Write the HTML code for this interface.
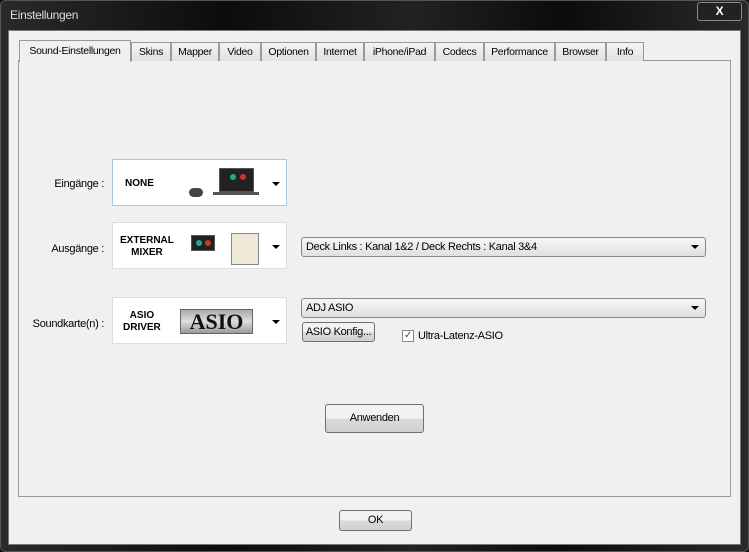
<!DOCTYPE html><html><head><style>
*{box-sizing:border-box}body{margin:0;width:749px;height:552px;overflow:hidden;background:#111;font-family:"Liberation Sans",sans-serif;font-size:11px;letter-spacing:-0.3px;color:#000;position:relative}
.a{position:absolute}
.win{left:0;top:0;width:749px;height:552px;background:linear-gradient(90deg,#2a2a2a,#0c0c0c 30%,#222 55%,#0b0b0b 75%,#2a2a2a);border:1px solid #555;border-radius:6px}
.client{left:8px;top:30px;width:733px;height:515px;background:#f0f0f0;border:1px solid #777}
.tab{top:42px;height:19px;background:linear-gradient(#f4f4f4,#e2e2e2);border:1px solid #999;border-bottom:none;text-align:center;line-height:18px;font-size:10.5px;white-space:nowrap;overflow:hidden}
.panel{left:18px;top:60px;width:713px;height:437px;background:#f0f0f0;border:1px solid #999}
.box{left:112px;width:175px;height:47px;background:#fff;border:1px solid #ddd}
.dd{left:301px;width:405px;height:20px;border:1px solid #888;border-radius:3px;background:linear-gradient(#f6f6f6,#e0e0e0);line-height:18px;padding-left:4px}
.arr{position:absolute;right:6px;top:7px;border:4px solid transparent;border-top:4px solid #000;border-bottom:0}
.btn{border:1px solid #707070;border-radius:3px;background:linear-gradient(#f2f2f2 50%,#dcdcdc 50%,#cfcfcf);text-align:center}
.lbl{width:104px;text-align:right}
.bt{font-weight:bold;font-size:10px;text-align:center;line-height:12px;letter-spacing:0}
.scr{background:#222;border:1px solid #555}
.dot{position:absolute;width:6px;height:6px;border-radius:3px}
</style></head><body>
<div class="a win"></div>
<div class="a" style="left:10px;top:8px;color:#ddd;font-size:12px">Einstellungen</div>
<div class="a" style="left:697px;top:2px;width:45px;height:19px;border:1px solid #888;border-radius:3px;background:#222;color:#fff;font-weight:bold;text-align:center;line-height:17px;font-size:12px">X</div>
<div class="a client"></div>
<div class="a panel"></div>
<div class="a tab" style="left:131px;width:40px">Skins</div>
<div class="a tab" style="left:171px;width:48px">Mapper</div>
<div class="a tab" style="left:219px;width:42px">Video</div>
<div class="a tab" style="left:261px;width:55px">Optionen</div>
<div class="a tab" style="left:316px;width:48px">Internet</div>
<div class="a tab" style="left:364px;width:71px">iPhone/iPad</div>
<div class="a tab" style="left:435px;width:49px">Codecs</div>
<div class="a tab" style="left:484px;width:71px">Performance</div>
<div class="a tab" style="left:555px;width:51px">Browser</div>
<div class="a tab" style="left:606px;width:38px">Info</div>
<div class="a tab" style="left:19px;top:40px;height:22px;width:112px;background:#f0f0f0;line-height:21px">Sound-Einstellungen</div>

<div class="a lbl" style="left:0;top:178px">Eingänge :</div>
<div class="a lbl" style="left:0;top:243px">Ausgänge :</div>
<div class="a lbl" style="left:0;top:318px">Soundkarte(n) :</div>

<div class="a box" style="top:159px;border-color:#a8c8e8"><div class="a bt" style="left:12px;top:18px">NONE</div>
<div class="a scr" style="left:106px;top:8px;width:35px;height:24px"><div class="dot" style="left:10px;top:5px;background:#2a8"></div><div class="dot" style="left:20px;top:5px;background:#c33"></div></div><div class="a" style="left:100px;top:32px;width:46px;height:3px;background:#555"></div><div class="a" style="left:76px;top:28px;width:14px;height:9px;background:#444;border-radius:6px"></div>
<div class="arr" style="top:22px"></div></div>
<div class="a box" style="top:222px"><div class="a bt" style="left:7px;top:12px">EXTERNAL<br>MIXER</div>
<div class="a scr" style="left:78px;top:12px;width:24px;height:16px"><div class="dot" style="left:4px;top:4px;background:#2a8"></div><div class="dot" style="left:13px;top:4px;background:#c33"></div></div><div class="a" style="left:118px;top:10px;width:28px;height:32px;background:#eee8d8;border:1px solid #888"></div>
<div class="arr" style="top:22px"></div></div>
<div class="a box" style="top:297px"><div class="a bt" style="left:10px;top:12px">ASIO<br>DRIVER</div>
<div class="a" style="left:67px;top:11px;width:73px;height:25px;background:linear-gradient(#aaa,#ddd,#999);border:1px solid #666;font-weight:bold;font-size:22px;line-height:23px;text-align:center;color:#111;font-family:'Liberation Serif',serif;letter-spacing:0">ASIO</div>
<div class="arr" style="top:22px"></div></div>

<div class="a dd" style="top:237px">Deck Links : Kanal 1&amp;2 / Deck Rechts : Kanal 3&amp;4<div class="arr"></div></div>
<div class="a dd" style="top:298px">ADJ ASIO<div class="arr"></div></div>
<div class="a btn" style="left:302px;top:322px;width:73px;height:20px;line-height:18px">ASIO Konfig...</div>
<div class="a" style="left:402px;top:330px;width:12px;height:12px;border:1px solid #888;background:#fff;color:#2a4a9a;font-size:10px;line-height:10px;text-align:center">✓</div>
<div class="a" style="left:418px;top:330px">Ultra-Latenz-ASIO</div>
<div class="a btn" style="left:325px;top:404px;width:99px;height:29px;line-height:27px">Anwenden</div>
<div class="a btn" style="left:339px;top:510px;width:73px;height:21px;line-height:19px">OK</div>
</body></html>
